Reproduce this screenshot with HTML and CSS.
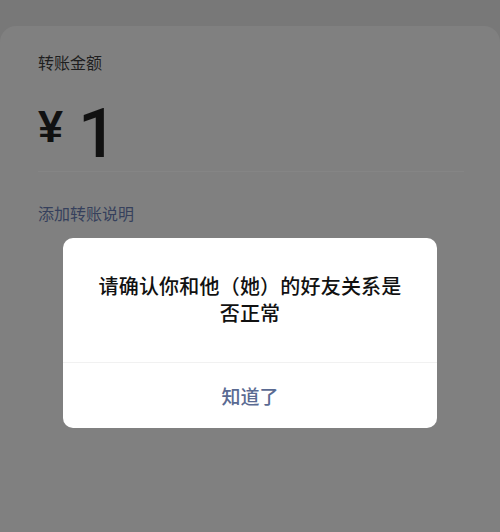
FILE: index.html
```html
<!DOCTYPE html>
<html lang="zh-CN">
<head>
<meta charset="utf-8">
<link rel="stylesheet" href="styles.css">
</head>
<body>
<div class="page">
  <div class="card">
    <div class="label">转账金额</div>
    <div class="amount"><span class="yen">¥</span><span class="num">1</span></div>
    <div class="divider"></div>
    <div class="note">添加转账说明</div>
  </div>
</div>
<div class="dialog">
  <div class="dialog-body">请确认你和他（她）的好友关系是否正常</div>
  <div class="dialog-btn">知道了</div>
</div>
</body>
</html>
```
FILE: styles.css
```css
html, body {
  margin: 0;
  padding: 0;
  height: 100%;
}
body {
  background: #787878;
  font-family: "Noto Sans CJK SC", "Noto Sans", sans-serif;
  overflow: hidden;
}
.page {
  padding-top: 26px;
  height: 100%;
  box-sizing: border-box;
}
.card {
  background: #808080;
  border-radius: 16px 16px 0 0;
  height: 100%;
  padding: 24px 36px 0 38px;
  box-sizing: border-box;
}
.label {
  font-size: 16px;
  line-height: 24px;
  font-weight: 400;
  color: #1e1e1e;
}
.amount {
  display: flex;
  align-items: flex-start;
  margin-top: 25px;
  height: 70px;
  color: #111111;
}
.yen {
  font-family: "Liberation Sans", sans-serif;
  font-weight: bold;
  font-size: 45px;
  line-height: 45px;
  margin-top: 5px;
  margin-right: 15px;
}
.num {
  font-family: "Roboto", sans-serif;
  font-weight: 500;
  font-size: 69px;
  line-height: 70px;
}
.divider {
  margin-top: 2px;
  height: 1px;
  background: #858585;
}
.note {
  margin-top: 29px;
  font-size: 16px;
  line-height: 24px;
  font-weight: 400;
  color: #36405c;
}
.dialog {
  position: absolute;
  left: 63px;
  top: 238px;
  width: 374px;
  height: 190px;
  background: #ffffff;
  border-radius: 10px;
  display: flex;
  flex-direction: column;
  overflow: hidden;
}
.dialog-body {
  flex: 1;
  padding: 34px 30px 0;
  text-align: center;
  font-size: 20px;
  line-height: 27px;
  font-weight: 500;
  letter-spacing: 0.2px;
  color: #111111;
  border-bottom: 1px solid #f1f1f1;
}
.dialog-btn {
  height: 65px;
  display: flex;
  align-items: center;
  justify-content: center;
  font-size: 19px;
  font-weight: 500;
  color: #5a6a92;
}
```
